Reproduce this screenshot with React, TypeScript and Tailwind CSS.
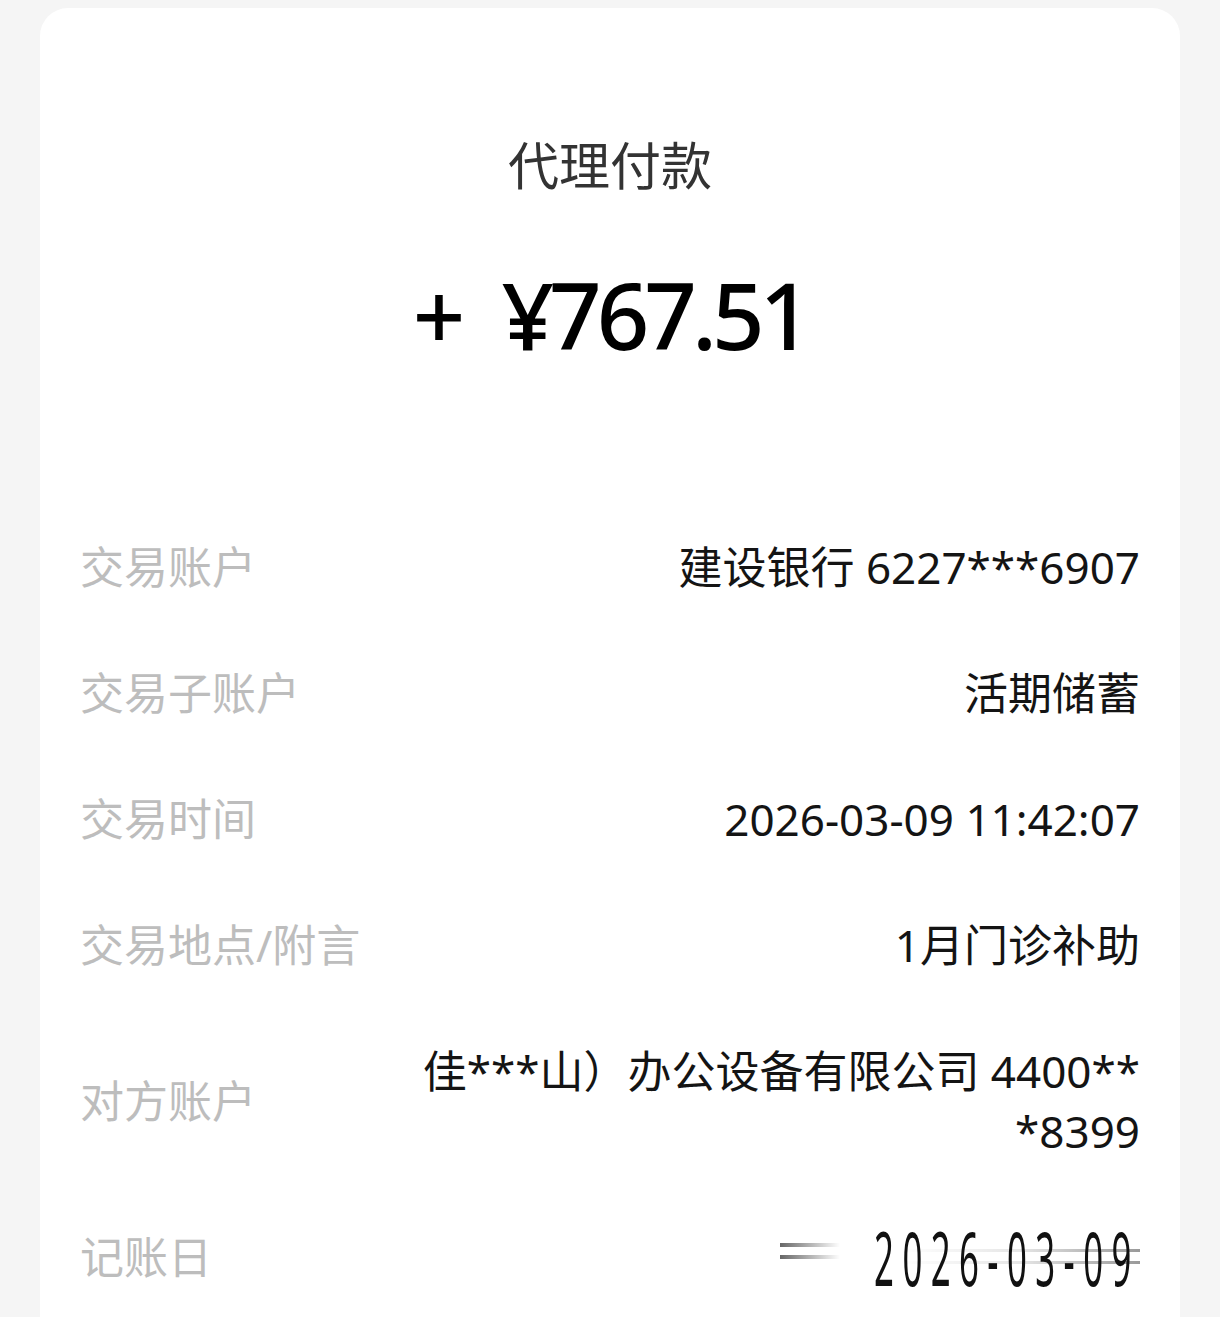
const ROWS = [
  { id: "account", label: "交易账户", value: "建设银行 6227***6907" },
  { id: "sub", label: "交易子账户", value: "活期储蓄" },
  { id: "time", label: "交易时间", value: "2026-03-09 11:42:07" },
  { id: "place", label: "交易地点/附言", value: "1月门诊补助" },
  {
    id: "peer",
    label: "对方账户",
    value: "佳***山）办公设备有限公司 4400***8399",
  },
] as const;

const FONT = {
  fontFamily: '"Noto Sans", "Noto Sans CJK SC", sans-serif',
};

function DetailRow({ label, value }: { label: string; value: string }) {
  return (
    <div className="flex items-center py-[33px]">
      <div className="w-[330px] shrink-0 text-[44px] leading-[60px] text-[#bdbdbd]">
        {label}
      </div>
      <div className="min-w-0 flex-1 text-right text-[44px] leading-[60px] break-all text-[#141414]">
        {value}
      </div>
    </div>
  );
}

export default function App() {
  return (
    <div
      className="h-[1317px] w-full overflow-hidden bg-[#f5f5f5] pt-2"
      style={FONT}
    >
      <div className="mx-10 h-[1400px] rounded-t-[28px] bg-white px-10 pt-[127px]">
        <h1 className="text-center text-[51px] leading-[60px] text-[#333333]">
          代理付款
        </h1>
        <div className="mt-[65px] flex items-center justify-center gap-[36px] text-[92px] leading-[110px] font-medium text-black">
          <span>+</span>
          <span className="tracking-[-5px]">¥767.51</span>
        </div>

        <div className="mt-[134px] flex flex-col">
          {ROWS.map(function renderRow(row) {
            return <DetailRow key={row.id} label={row.label} value={row.value} />;
          })}

          {/* last row, photographed mid-scroll so the value is smeared */}
          <div className="flex items-center py-[33px]">
            <div className="w-[330px] shrink-0 text-[44px] leading-[60px] text-[#bdbdbd]">
              记账日
            </div>
            <div className="relative flex flex-1 items-center justify-end">
              <span className="absolute right-[300px] top-[16px] h-[4px] w-[60px] bg-gradient-to-r from-black/60 to-transparent" />
              <span className="absolute right-[300px] top-[28px] h-[4px] w-[60px] bg-gradient-to-r from-black/60 to-transparent" />
              <span className="absolute right-0 top-[22px] h-[3px] w-[240px] bg-gradient-to-r from-transparent via-black/10 to-black/40" />
              <span className="absolute right-0 top-[34px] h-[3px] w-[240px] bg-gradient-to-r from-transparent via-black/10 to-black/40" />
              <span className="inline-block origin-right scale-x-[0.6] scale-y-[1.3] text-[58px] leading-[60px] tracking-[14px] text-[#111]">
                2026-03-09
              </span>
            </div>
          </div>
        </div>
      </div>
    </div>
  );
}
